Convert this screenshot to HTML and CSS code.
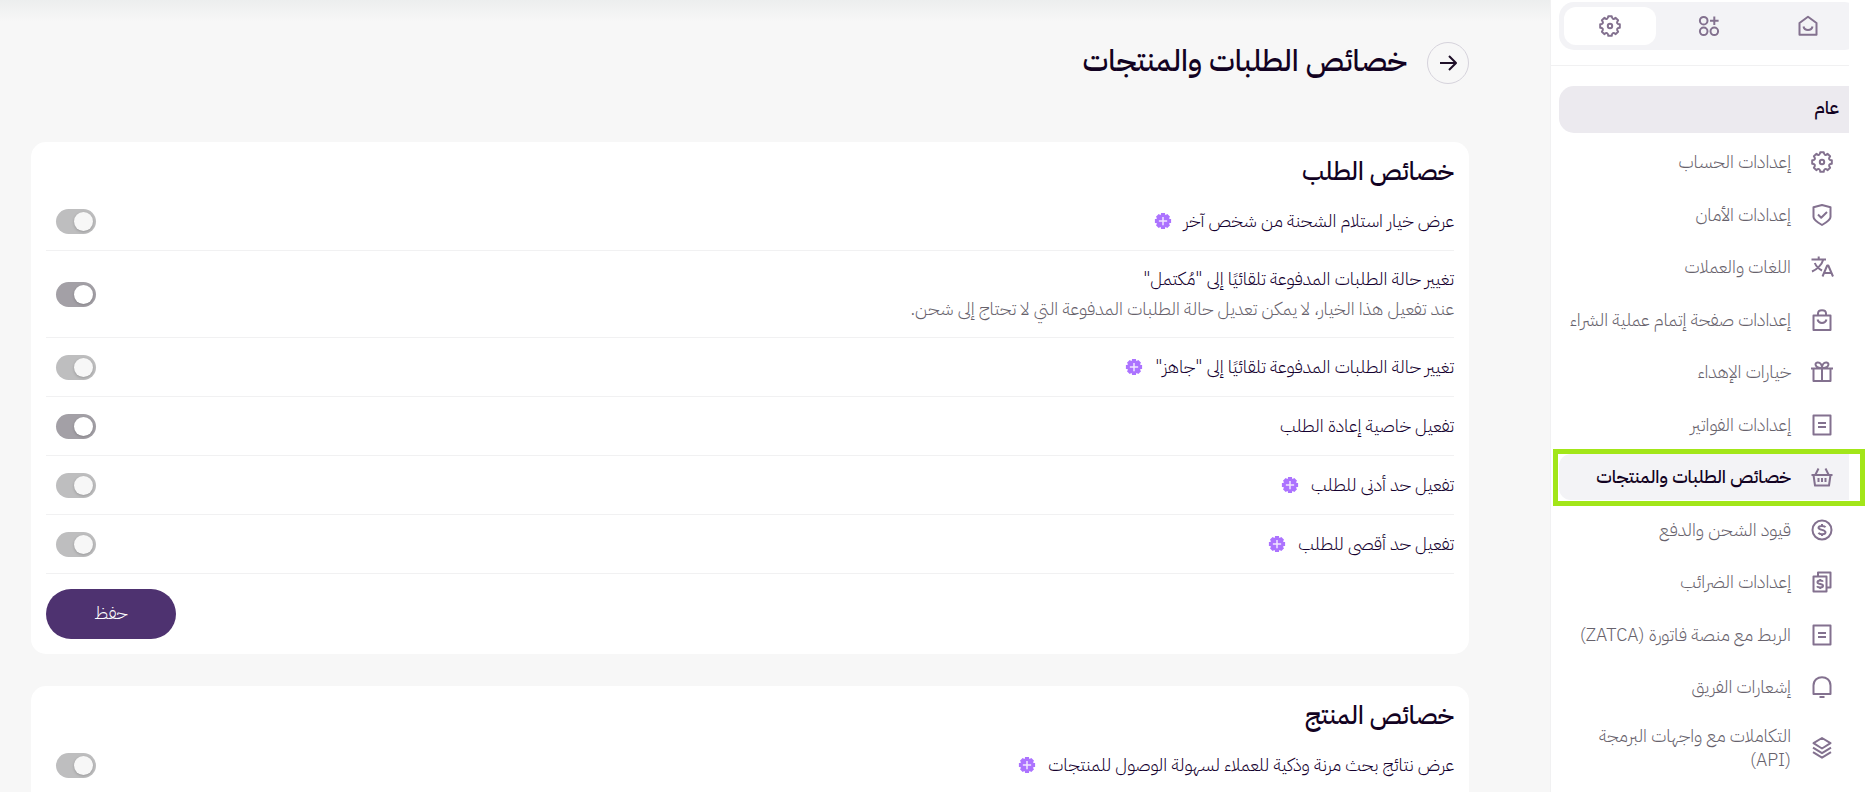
FILE: index.html
```html
<!DOCTYPE html>
<html lang="ar" dir="rtl">
<head>
    <meta charset="UTF-8">
    <meta name="viewport" content="width=device-width, initial-scale=1.0">
    <title>خصائص الطلبات والمنتجات</title>
    <link rel="stylesheet" href="styles.css">
</head>
<body>
    <!-- Icons -->
    <svg class="sprite" aria-hidden="true">
        <symbol id="gear" viewBox="0 0 24 24">
            <path d="M10.3 2.2H13.7Q14.2 6.6 17.7 3.9L20.1 6.3Q17.4 9.8 21.8 10.3V13.7Q17.4 14.2 20.1 17.7L17.7 20.1Q14.2 17.4 13.7 21.8H10.3Q9.8 17.4 6.3 20.1L3.9 17.7Q6.6 14.2 2.2 13.7V10.3Q6.6 9.8 3.9 6.3L6.3 3.9Q9.8 6.6 10.3 2.2Z"/>
            <circle cx="12" cy="12" r="2.2"/>
        </symbol>
        <symbol id="apps" viewBox="0 0 24 24">
            <circle cx="6.7" cy="6.7" r="3.8"/><circle cx="6.7" cy="17.3" r="3.8"/><circle cx="17.3" cy="17.3" r="3.8"/>
            <path d="M17.3 2.4V11M13 6.7H21.6"/>
        </symbol>
        <symbol id="home" viewBox="0 0 24 24">
            <path d="M3.5 9L12 2.8L20.5 9V20.7H3.5ZM7.5 12.5C8.6 17.2 15.4 17.2 16.5 12.5"/>
        </symbol>
        <symbol id="shield" viewBox="0 0 24 24">
            <path d="M12 2L20.5 4.2V14C20.5 16.5 18.5 18.2 12 22C5.5 18.2 3.5 16.5 3.5 14V4.2ZM8 11.5L11.2 14.7L17 9"/>
        </symbol>
        <symbol id="lang" viewBox="0 0 24 24">
            <path d="M1.5 4.5H16M8.7 1.5V4.5M13.3 4.5C12 9.5 7 14.5 2 16.5M4.8 8C6 11 9 14 12 15.5M12.5 21.5L17.2 10.5H18.3L23 21.5M14.5 18H21"/>
        </symbol>
        <symbol id="bag" viewBox="0 0 24 24">
            <path d="M3.5 7.5H20.5V22H3.5ZM8 7V5.5C8 1 16 1 16 5.5V7M7.5 11.5C8.6 16 15.4 16 16.5 11.5"/>
        </symbol>
        <symbol id="gift" viewBox="0 0 24 24">
            <path d="M1 8.5H23M3.5 8.5V21H20.5V8.5M12 8V21M12 8C5 8 4 3 7.5 2.5C10.5 2.2 12 5 12 8C12 5 13.5 2.2 16.5 2.5C20 3 19 8 12 8"/>
        </symbol>
        <symbol id="invoice" viewBox="0 0 24 24">
            <path d="M3.5 2.5H20.5V21.5H3.5ZM8 10H16M8 14H16"/>
        </symbol>
        <symbol id="basket" viewBox="0 0 24 24">
            <path d="M1.5 10H22.5M3.5 10L5 20.5H19L20.5 10M5.5 9.5L8.5 3.5M18.5 9.5L15.5 3.5M8.5 13V17M12 13V17M15.5 13V17"/>
        </symbol>
        <symbol id="dollar" viewBox="0 0 24 24">
            <circle cx="12" cy="12" r="9.5"/>
            <path d="M15.5 9.3C14.5 7.5 8.5 7.3 8.5 9.8C8.5 12.3 15.5 11.5 15.5 14.2C15.5 16.8 9.5 16.8 8.5 14.7M12 6V8M12 16V18"/>
        </symbol>
        <symbol id="tax" viewBox="0 0 24 24">
            <path d="M3.5 6.5H16.5V21.5H3.5ZM8 6V2.5H20.5V17.5H17M13 11.7C12.3 10.2 7.5 10 7.5 12.2C7.5 14.5 13 13.5 13 15.8C13 18 8 18 7 16.2M10.2 9V10.5M10.2 17.5V19"/>
        </symbol>
        <symbol id="bell" viewBox="0 0 24 24">
            <path d="M3.5 19V10.5C3.5 -0.5 20.5 -0.5 20.5 10.5V19ZM9.5 22H14.5"/>
        </symbol>
        <symbol id="layers" viewBox="0 0 24 24">
            <path d="M12 2L20.5 7.2L12 12.5L3.5 7.2ZM3 11.7L12 17.2L21 11.7M3 16.2L12 21.7L21 16.2"/>
        </symbol>
        <symbol id="arrow" viewBox="0 0 24 24">
            <path d="M4 12H20M13 5L20 12L13 19"/>
        </symbol>
        <symbol id="plus" viewBox="0 0 24 24">
            <path fill="#ac73ff" stroke="#ac73ff" d="M10.3 2.2H13.7Q14.2 6.6 17.7 3.9L20.1 6.3Q17.4 9.8 21.8 10.3V13.7Q17.4 14.2 20.1 17.7L17.7 20.1Q14.2 17.4 13.7 21.8H10.3Q9.8 17.4 6.3 20.1L3.9 17.7Q6.6 14.2 2.2 13.7V10.3Q6.6 9.8 3.9 6.3L6.3 3.9Q9.8 6.6 10.3 2.2Z"/>
            <path stroke="#f1e6ff" d="M12 6.5V17.5M6.5 12H17.5"/>
        </symbol>
    </svg>

    <aside class="sidebar">
        <div class="tabs-wrap">
            <nav class="tabs" aria-label="الأقسام">
                <a href="#home" aria-label="الرئيسية"><svg class="icon"><use href="#home"/></svg></a>
                <a href="#apps" aria-label="التطبيقات"><svg class="icon"><use href="#apps"/></svg></a>
                <a class="current" href="#settings" aria-label="الإعدادات"><svg class="icon"><use href="#gear"/></svg></a>
            </nav>
        </div>
        <nav class="menu">
            <h2 class="menu-title">عام</h2>
            <ul class="menu-list">
                <li><a href="#"><svg class="icon"><use href="#gear"/></svg><span>إعدادات الحساب</span></a></li>
                <li><a href="#"><svg class="icon"><use href="#shield"/></svg><span>إعدادات الأمان</span></a></li>
                <li><a href="#"><svg class="icon"><use href="#lang"/></svg><span>اللغات والعملات</span></a></li>
                <li><a href="#"><svg class="icon"><use href="#bag"/></svg><span>إعدادات صفحة إتمام عملية الشراء</span></a></li>
                <li><a href="#"><svg class="icon"><use href="#gift"/></svg><span>خيارات الإهداء</span></a></li>
                <li><a href="#"><svg class="icon"><use href="#invoice"/></svg><span>إعدادات الفواتير</span></a></li>
                <li class="active"><a href="#"><svg class="icon"><use href="#basket"/></svg><span>خصائص الطلبات والمنتجات</span></a></li>
                <li><a href="#"><svg class="icon"><use href="#dollar"/></svg><span>قيود الشحن والدفع</span></a></li>
                <li><a href="#"><svg class="icon"><use href="#tax"/></svg><span>إعدادات الضرائب</span></a></li>
                <li><a href="#"><svg class="icon"><use href="#invoice"/></svg><span>الربط مع منصة فاتورة (ZATCA)</span></a></li>
                <li><a href="#"><svg class="icon"><use href="#bell"/></svg><span>إشعارات الفريق</span></a></li>
                <li><a href="#"><svg class="icon"><use href="#layers"/></svg><span>التكاملات مع واجهات البرمجة<br>(API)</span></a></li>
            </ul>
        </nav>
    </aside>

    <main class="content">
        <header class="page-header">
            <a class="back" href="#" aria-label="رجوع"><svg class="icon"><use href="#arrow"/></svg></a>
            <h1>خصائص الطلبات والمنتجات</h1>
        </header>

        <form class="card">
            <h2>خصائص الطلب</h2>
            <div class="row">
                <label for="pickup">عرض خيار استلام الشحنة من شخص آخر</label>
                <svg class="badge"><use href="#plus"/></svg>
                <input class="switch" id="pickup" type="checkbox" disabled>
            </div>
            <div class="row row-tall">
                <div>
                    <label for="completed">تغيير حالة الطلبات المدفوعة تلقائيًا إلى "مُكتمل"</label>
                    <p class="hint">عند تفعيل هذا الخيار، لا يمكن تعديل حالة الطلبات المدفوعة التي لا تحتاج إلى شحن.</p>
                </div>
                <input class="switch" id="completed" type="checkbox">
            </div>
            <div class="row">
                <label for="ready">تغيير حالة الطلبات المدفوعة تلقائيًا إلى "جاهز"</label>
                <svg class="badge"><use href="#plus"/></svg>
                <input class="switch" id="ready" type="checkbox" disabled>
            </div>
            <div class="row">
                <label for="reorder">تفعيل خاصية إعادة الطلب</label>
                <input class="switch" id="reorder" type="checkbox">
            </div>
            <div class="row">
                <label for="min">تفعيل حد أدنى للطلب</label>
                <svg class="badge"><use href="#plus"/></svg>
                <input class="switch" id="min" type="checkbox" disabled>
            </div>
            <div class="row">
                <label for="max">تفعيل حد أقصى للطلب</label>
                <svg class="badge"><use href="#plus"/></svg>
                <input class="switch" id="max" type="checkbox" disabled>
            </div>
            <button class="save" type="submit">حفظ</button>
        </form>

        <form class="card">
            <h2>خصائص المنتج</h2>
            <div class="row">
                <label for="search">عرض نتائج بحث مرنة وذكية للعملاء لسهولة الوصول للمنتجات</label>
                <svg class="badge"><use href="#plus"/></svg>
                <input class="switch" id="search" type="checkbox" disabled>
            </div>
        </form>
    </main>
</body>
</html>
```
FILE: styles.css
```css
* {
    box-sizing: border-box;
    margin: 0;
    padding: 0;
}

body {
    display: flex;
    height: 100vh;
    overflow: hidden;
    background-color: #f7f7f7;
    color: #14002e;
    font-family: "IBM Plex Sans Arabic", "Open Sans", "DejaVu Sans", sans-serif;
    font-size: 18px;
    font-weight: 300;
}

a {
    color: inherit;
    text-decoration: none;
}

.sprite {
    position: absolute;
    width: 0;
    height: 0;
}

.icon {
    flex: none;
    width: 24px;
    height: 24px;
    fill: none;
    stroke: #83718f;
    stroke-width: 2;
    stroke-linejoin: round;
}

/* Sidebar */
.sidebar {
    display: flex;
    flex-direction: column;
    flex: none;
    width: 315px;
    padding-bottom: 13px;
    background-color: #fff;
    border-left: 1px solid #f1f1f2;
}

.tabs-wrap {
    margin-right: 16px;
    padding: 2px 0 15px 8px;
    overflow: hidden;
    border-bottom: 1px solid #f1f1f2;
}

.tabs {
    display: grid;
    grid-template-columns: repeat(3, 1fr);
    gap: 7px;
    height: 48px;
    margin-right: -10px;
    padding: 5px;
    border-radius: 15px;
    background-color: #f3f3f6;
}

.tabs a {
    display: flex;
    align-items: center;
    justify-content: center;
    border-radius: 12px;
}

.tabs .current {
    background-color: #fff;
}

.menu {
    display: flex;
    flex-direction: column;
    flex: 1;
    padding: 20px 16px 0 8px;
}

.menu-title {
    height: 47px;
    margin-bottom: 6px;
    padding-right: 10px;
    border-top-left-radius: 15px;
    border-bottom-left-radius: 15px;
    background-color: #eceaef;
    color: #120222;
    font-size: 18px;
    font-weight: 500;
    line-height: 44px;
}

.menu-list {
    display: flex;
    flex-direction: column;
    flex: 1;
    justify-content: space-between;
    list-style: none;
}

.menu-list li {
    position: relative;
}

.menu-list a {
    display: flex;
    align-items: center;
    gap: 19px;
    min-height: 46px;
    padding: 7px 15px 7px 0;
    color: #67626c;
    line-height: 24px;
    white-space: nowrap;
}

.menu-list .active a {
    border-top-left-radius: 12px;
    border-bottom-left-radius: 12px;
    background-color: #f3f3f6;
    color: #120222;
    font-weight: 500;
}

/* Marker around the selected item */
.menu-list .active::after {
    content: "";
    position: absolute;
    inset: -5px -16px -6px -6px;
    border: 5px solid #a2e619;
    pointer-events: none;
}

/* Content */
.content {
    flex: 1;
    padding: 42px 81px 0 31px;
    overflow: hidden;
    background-image: linear-gradient(#eceeee, #f7f7f7 22px);
}

.page-header {
    display: flex;
    align-items: center;
    gap: 20px;
    height: 42px;
    margin-bottom: 58px;
}

.back {
    display: flex;
    align-items: center;
    justify-content: center;
    width: 42px;
    height: 42px;
    border: 1px solid #d6d3dc;
    border-radius: 50%;
}

.back .icon {
    stroke: #1f1029;
}

h1 {
    padding-bottom: 4px;
    color: #120222;
    font-size: 30px;
    font-weight: 500;
    line-height: 36px;
}

.card {
    margin-bottom: 32px;
    padding: 15px;
    border-radius: 15px;
    background-color: #fff;
}

.card h2 {
    height: 35px;
    color: #120222;
    font-size: 25px;
    font-weight: 500;
    line-height: 30px;
}

.row {
    display: flex;
    align-items: center;
    gap: 12px;
    height: 59px;
    padding-left: 10px;
    border-bottom: 1px solid #f1f1f2;
}

.row-tall {
    height: 87px;
}

.row label {
    line-height: 30px;
}

.hint {
    color: #67626c;
    line-height: 30px;
}

.badge {
    width: 18px;
    height: 18px;
    stroke-width: 2;
}

.switch {
    appearance: none;
    width: 40px;
    height: 25px;
    margin-right: auto;
    padding: 3px;
    border-radius: 13px;
    background-color: #a3a0a6;
}

.switch::before {
    content: "";
    display: block;
    width: 19px;
    height: 19px;
    border-radius: 50%;
    background-color: #fff;
    box-shadow: 0 1px 3px rgba(0, 0, 0, 0.2);
}

.switch:checked::before {
    margin-right: 15px;
}

.switch:disabled {
    background-color: #bebebf;
}

.switch:disabled::before {
    background-color: #f7f7f7;
}

.save {
    display: block;
    width: 130px;
    height: 50px;
    margin-top: 15px;
    margin-right: auto;
    padding-bottom: 3px;
    border: none;
    border-radius: 25px;
    background-color: #4e3270;
    color: #fff;
    font: inherit;
}
```
